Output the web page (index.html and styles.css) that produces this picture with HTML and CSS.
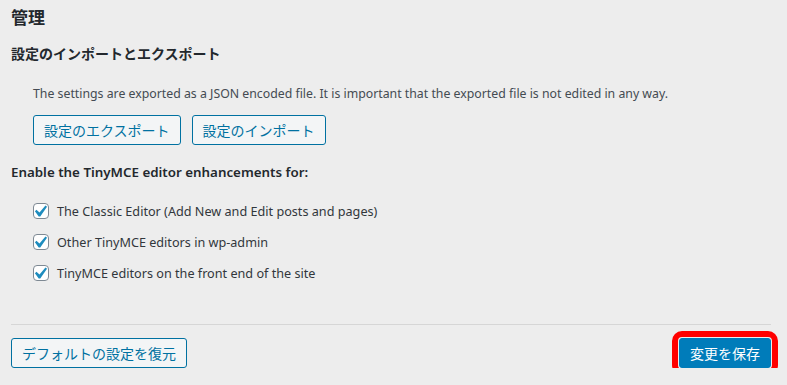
FILE: index.html
```html
<!DOCTYPE html>
<html lang="ja">
  <head>
    <meta charset="utf-8">
    <title>管理</title>
    <link rel="stylesheet" href="styles.css">
  </head>
  <body>
    <div class="wrap">
      <h2 class="page-title">管理</h2>

      <h3 class="section-title">設定のインポートとエクスポート</h3>
      <div class="indent">
        <p class="description">The settings are exported as a JSON encoded file. It is important that the exported file is not edited in any way.</p>
        <div class="button-row">
          <button class="button">設定のエクスポート</button>
          <button class="button">設定のインポート</button>
        </div>
      </div>

      <h3 class="section-title en">Enable the TinyMCE editor enhancements for:</h3>
      <ul class="indent checks">
        <li>
          <label class="check-item">
            <span class="checkbox"><svg viewBox="5 3.5 12 12" width="14" height="14"><path d="M14.83 4.89l1.34.94-5.81 8.38H9.02L5.78 9.67l1.34-1.25 2.57 2.4z"/></svg></span>
            The Classic Editor (Add New and Edit posts and pages)
          </label>
        </li>
        <li>
          <label class="check-item">
            <span class="checkbox"><svg viewBox="5 3.5 12 12" width="14" height="14"><path d="M14.83 4.89l1.34.94-5.81 8.38H9.02L5.78 9.67l1.34-1.25 2.57 2.4z"/></svg></span>
            Other TinyMCE editors in wp-admin
          </label>
        </li>
        <li>
          <label class="check-item">
            <span class="checkbox"><svg viewBox="5 3.5 12 12" width="14" height="14"><path d="M14.83 4.89l1.34.94-5.81 8.38H9.02L5.78 9.67l1.34-1.25 2.57 2.4z"/></svg></span>
            TinyMCE editors on the front end of the site
          </label>
        </li>
      </ul>

      <div class="footer-bar">
        <button class="button">デフォルトの設定を復元</button>
        <button class="button button-primary">変更を保存</button>
      </div>
    </div>
  </body>
</html>
```

FILE: styles.css
```css
body {
  margin: 0;
  background: #ededed;
  color: #32373c;
  font-family: "Noto Sans", "Noto Sans CJK JP", sans-serif;
  font-size: 13px;
}
.wrap {
  padding: 6px 16px 0 11px;
}
/* 見出し */
.page-title {
  margin: 0;
  font-size: 17px;
  line-height: 24px;
  font-weight: 700;
  color: #23282d;
}
.section-title {
  margin: 14px 0 0;
  font-size: 14px;
  line-height: 20px;
  font-weight: 600;
  color: #23282d;
}
.section-title.en {
  margin-top: 17px;
  font-size: 13.35px;
}
.indent {
  padding-left: 22px;
}
.description {
  margin: 20px 0 0;
  font-size: 12.3px;
  line-height: 20px;
  color: #444b52;
}
.button-row {
  display: flex;
  gap: 11px;
  margin-top: 11px;
}
/* ボタン */
.button {
  height: 30px;
  padding: 0 10px;
  border: 1px solid #0071a1;
  border-radius: 3px;
  background: #f3f5f6;
  color: #0071a1;
  font-family: "Noto Sans CJK JP", sans-serif;
  font-size: 14px;
  line-height: 28px;
}
.button-primary {
  background: #007cba;
  border-color: #007cba;
  color: #fff;
  outline: 6px solid #f00;
  outline-offset: 1px;
}
/* チェックボックス */
.checks {
  list-style: none;
  margin: 19px 0 0;
}
.checks li {
  height: 20px;
  margin-bottom: 11px;
  line-height: 20px;
}
.check-item {
  display: flex;
  align-items: center;
  gap: 8px;
  font-size: 12.65px;
  color: #32373c;
}
.checkbox {
  display: flex;
  width: 14px;
  height: 14px;
  border: 1px solid #7e8993;
  border-radius: 4px;
  background: #fff;
}
.checkbox svg {
  fill: #1e8cbe;
}
.footer-bar {
  display: flex;
  justify-content: space-between;
  margin-top: 41px;
  padding-top: 13px;
  border-top: 1px solid #d6d6d6;
}
```
